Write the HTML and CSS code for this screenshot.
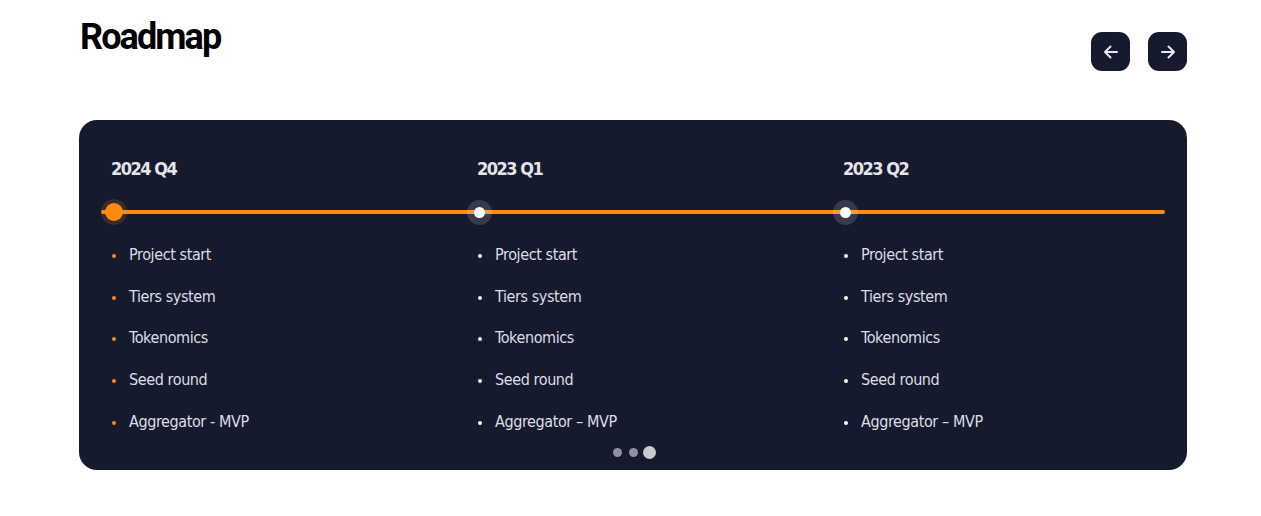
FILE: index.html
```html
<!DOCTYPE html>
<html lang="en">
<head>
<meta charset="utf-8">
<title>Roadmap</title>
<link rel="stylesheet" href="styles.css">
</head>
<body>
<section class="roadmap">
  <header class="head">
    <h1 class="title">Roadmap</h1>
    <div class="nav">
      <button class="nav-btn" aria-label="Previous">
        <svg width="18" height="18" viewBox="0 0 18 18" fill="none" stroke="#e8e9ee" stroke-width="2" stroke-linecap="round" stroke-linejoin="round"><path d="M15 9H3M8.5 3.5L3 9l5.5 5.5"/></svg>
      </button>
      <button class="nav-btn" aria-label="Next">
        <svg width="18" height="18" viewBox="0 0 18 18" fill="none" stroke="#e8e9ee" stroke-width="2" stroke-linecap="round" stroke-linejoin="round"><path d="M3 9h12M9.5 3.5L15 9l-5.5 5.5"/></svg>
      </button>
    </div>
  </header>
  <div class="card">
    <div class="track">
      <div class="col active">
        <h2 class="period">2024 Q4</h2>
        <div class="marker"><span class="dot"></span></div>
        <ul class="items">
          <li>Project start</li>
          <li>Tiers system</li>
          <li>Tokenomics</li>
          <li>Seed round</li>
          <li>Aggregator - MVP</li>
        </ul>
      </div>
      <div class="col">
        <h2 class="period">2023 Q1</h2>
        <div class="marker"><span class="dot"></span></div>
        <ul class="items">
          <li>Project start</li>
          <li>Tiers system</li>
          <li>Tokenomics</li>
          <li>Seed round</li>
          <li>Aggregator – MVP</li>
        </ul>
      </div>
      <div class="col">
        <h2 class="period">2023 Q2</h2>
        <div class="marker"><span class="dot"></span></div>
        <ul class="items">
          <li>Project start</li>
          <li>Tiers system</li>
          <li>Tokenomics</li>
          <li>Seed round</li>
          <li>Aggregator – MVP</li>
        </ul>
      </div>
    </div>
    <div class="pager">
      <span class="pdot"></span><span class="pdot"></span><span class="pdot current"></span>
    </div>
  </div>
</section>
</body>
</html>
```
FILE: styles.css
```css
* { box-sizing: border-box; }
html, body { margin: 0; padding: 0; background: #ffffff; }
body {
  font-family: "DejaVu Sans Condensed", "DejaVu Sans", sans-serif;
  color: #101320;
}
.roadmap {
  width: 1108px;
  margin: 0 0 0 79px;
}
.head {
  display: flex;
  justify-content: space-between;
  align-items: flex-start;
  height: 120px;
}
.title {
  margin: 15px 0 0 1px;
  font-family: Roboto, "DejaVu Sans Condensed", sans-serif;
  font-size: 36px;
  line-height: 44px;
  font-weight: 700;
  letter-spacing: -1.9px;
  color: #000;
}
.nav {
  display: flex;
  gap: 18px;
  margin-top: 32px;
}
.nav-btn {
  width: 39px;
  height: 39px;
  border: 0;
  padding: 0;
  border-radius: 11px;
  background: #161a2d;
  display: flex;
  align-items: center;
  justify-content: center;
  cursor: pointer;
}
.card {
  position: relative;
  background: #161a2d;
  border-radius: 18px;
  height: 350px;
  padding: 36px 22px 0 22px;
}
.track {
  display: grid;
  grid-template-columns: 366px 366px 1fr;
  position: relative;
}
.track::before {
  content: "";
  position: absolute;
  left: 0;
  right: 0;
  top: 54px;
  height: 4px;
  border-radius: 2px;
  background: #ff8a12;
}
.col { padding-left: 10px; }
.period {
  margin: 0;
  font-size: 18px;
  line-height: 26px;
  font-weight: 700;
  letter-spacing: -1.5px;
  color: #e4e5ea;
}
.marker {
  position: relative;
  height: 26px;
  margin-top: 17px;
  display: flex;
  align-items: center;
}
.dot {
  position: relative;
  display: block;
  width: 11px;
  height: 11px;
  border-radius: 50%;
  background: #ffffff;
  margin-left: -3px;
  box-shadow: 0 0 0 7px rgba(255,255,255,0.14);
}
.active .dot {
  width: 18px;
  height: 18px;
  margin-left: -6px;
  background: #ff8a12;
  box-shadow: 0 0 0 4px rgba(255,138,18,0.16);
}
.items {
  list-style: none;
  margin: 20px 0 0 0;
  padding: 0;
}
.items li {
  position: relative;
  padding-left: 18px;
  font-size: 16px;
  line-height: 20px;
  height: 41.7px;
  letter-spacing: -0.4px;
  color: #dcdee5;
}
.items li::before {
  content: "";
  position: absolute;
  left: 1px;
  top: 9px;
  width: 4px;
  height: 4px;
  border-radius: 50%;
  background: #ffffff;
}
.active .items li::before { background: #ff8a12; }
.pager {
  position: absolute;
  left: 0;
  right: 0;
  bottom: 11px;
  display: flex;
  justify-content: center;
  align-items: center;
  padding-left: 2px;
}
.pdot {
  width: 9px;
  height: 9px;
  border-radius: 50%;
  background: #8e909c;
  margin-right: 7px;
}
.pdot.current {
  width: 13px;
  height: 13px;
  margin-left: -2px;
  margin-right: 0;
  background: #c9cad1;
}
```
